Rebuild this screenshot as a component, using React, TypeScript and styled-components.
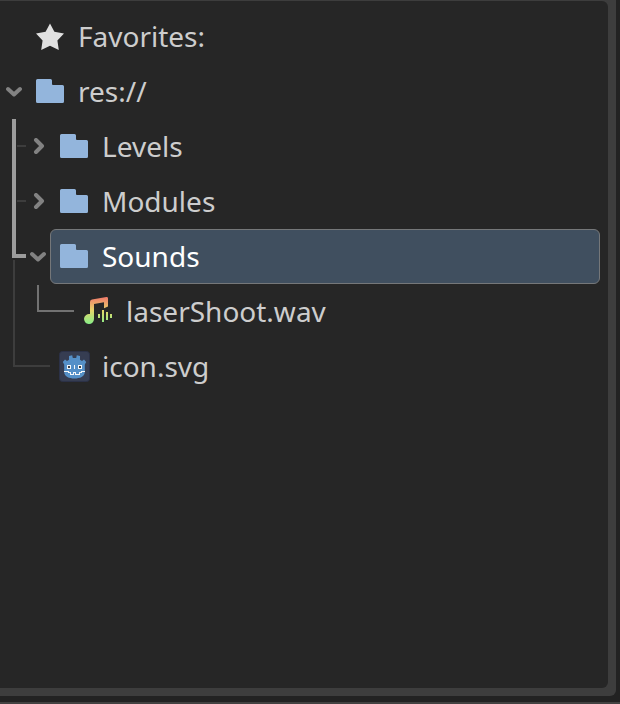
import React from 'react';
import styled, { createGlobalStyle } from 'styled-components';

const GlobalStyle = createGlobalStyle`
  * { box-sizing: border-box; }
  body { margin: 0; background: #222222; }
`;

const Dock = styled.div`
  display: flex;
  flex-direction: column;
  justify-content: space-between;
  width: 620px;
  height: 704px;
  overflow: hidden;
  background: #222222;
  font-family: 'Noto Sans', sans-serif;
`;

const Frame = styled.div`
  width: 616px;
  height: 696px;
  padding: 1px 8px 8px 0;
  background: #3d3d3d;
  border-bottom-right-radius: 6px;
`;

const Tree = styled.div`
  position: relative;
  height: 687px;
  padding: 8px 8px 0 0;
  background: #262626;
  border-radius: 0 6px 6px 0;
`;

const BottomEdge = styled.div`
  height: 2px;
  background: #434141;
`;

const Row = styled.div<{ $depth: number }>`
  display: flex;
  height: 55px;
  padding-left: ${(p) => 6 + p.$depth * 24}px;
`;

const Toggle = styled.div`
  display: flex;
  align-items: center;
  flex: 0 0 20px;
  svg { display: block; }
`;

const Item = styled.div<{ $selected?: boolean }>`
  display: flex;
  align-items: center;
  flex: 1;
  gap: 12px;
  padding: 0 0 1px 7px;
  border: 1px solid ${(p) => (p.$selected ? '#757779' : 'transparent')};
  border-radius: 6px;
  background: ${(p) => (p.$selected ? '#404f5f' : 'transparent')};
  color: ${(p) => (p.$selected ? '#ffffff' : '#cdcdcd')};
`;

const Label = styled.span`
  font-size: 28px;
  line-height: 38px;
  white-space: pre;
`;

const Icon = styled.svg`
  display: block;
  flex: none;
  width: 32px;
  height: 32px;
  overflow: visible;
`;

const Guides = styled.svg`
  position: absolute;
  left: 0;
  top: 0;
  pointer-events: none;
`;

const Chevron = ({ open }: { open: boolean }) => (
  <svg width="16" height="17" viewBox="0 0 16 17" fill="none" stroke="#828282" strokeWidth="4" strokeLinecap="round" strokeLinejoin="round">
    <path d={open ? 'M2 6l6 5.5L14 6' : 'M6 2l6 6-6 6'} />
  </svg>
);

const StarIcon = () => (
  <Icon viewBox="0 0 32 32" fill="#e0e0e0">
    <path d="M16 3.6l4.4 8.2 9.6 1.8-6.6 6.9 1.4 9.5-8.8-4.2L7.2 30l1.4-9.5L2 13.6l9.6-1.8z" />
  </Icon>
);

const FolderIcon = () => (
  <Icon viewBox="0 0 32 32" fill="#93b5dc">
    <path d="M3.500 4h13a1.500 1.500 0 0 1 1.500 1.500v3.500a1 1 0 0 0 1 1h9.500a1.500 1.500 0 0 1 1.500 1.500v15a1.500 1.500 0 0 1-1.500 1.500h-25a1.500 1.500 0 0 1-1.500-1.500v-21a1.500 1.500 0 0 1 1.500-1.500z" />
  </Icon>
);

const AudioIcon = () => (
  <Icon viewBox="0 0 32 32">
    <defs>
      <linearGradient id="wave" gradientUnits="userSpaceOnUse" x1="0" y1="2" x2="0" y2="29">
        <stop offset="0" stopColor="#f0796b" />
        <stop offset=".5" stopColor="#e6d56a" />
        <stop offset="1" stopColor="#86ee88" />
      </linearGradient>
    </defs>
    <g fill="url(#wave)">
      <path d="M24.4 2L10 4.6Q8 5 8 7v12.1A5 5 0 1 0 12 24V9l10-1.8v6L26 11.5V3.4Q26 1.800 24.400 2z" />
      <path d="M16 19h2v4h-2zM20 15h2v12h-2zM24 17h2v8h-2zM28 19h2v4h-2z" />
    </g>
  </Icon>
);

const GodotIcon = () => (
  <Icon viewBox="0 0 32 32">
    <rect x="1.5" y="1.500" width="30" height="30" rx="3" fill="#363d52" stroke="#2b3147" />
    <path
      fill="#5590c8"
      d="M11 6l3.200-.8.6 2.800h3.400l.6-2.800L22 6v3.800l2 1.200 2-1.500 2.200 2.500-1.400 2.500V22c0 4.500-5 6.500-10.300 6.500S6.200 26.500 6.200 22v-7.500L4.800 12 7 9.500 9 11l2-1.200z"
    />
    <g shapeRendering="crispEdges">
      <path fill="#f4f7fa" d="M9 15h4v4H9zM20 15h4v4h-4zM16 15h1v4h-1z" />
      <path fill="#3c3f45" d="M10 16h2v2h-2zM21 16h2v2h-2z" />
      <path fill="none" stroke="#f4f7fa" d="M6 21.500h4v1h2v2h3.500v-2.500h2v2.500H21v-2h2v-1h4" />
    </g>
  </Icon>
);

const icons = { star: StarIcon, folder: FolderIcon, audio: AudioIcon, godot: GodotIcon };

interface Entry {
  name: string;
  icon: keyof typeof icons;
  depth: number;
  open?: boolean;
  selected?: boolean;
}

const entries: Entry[] = [
  { name: 'Favorites:', icon: 'star', depth: 0 },
  { name: 'res://', icon: 'folder', depth: 0, open: true },
  { name: 'Levels', icon: 'folder', depth: 1, open: false },
  { name: 'Modules', icon: 'folder', depth: 1, open: false },
  { name: 'Sounds', icon: 'folder', depth: 1, open: true, selected: true },
  { name: 'laserShoot.wav', icon: 'audio', depth: 2 },
  { name: 'icon.svg', icon: 'godot', depth: 1 },
];

export default function App() {
  return (
    <>
      <GlobalStyle />
      <Dock>
        <Frame>
          <Tree>
            {entries.map(({ name, icon, depth, open, selected }) => {
              const Glyph = icons[icon];
              return (
                <Row key={name} $depth={depth}>
                  <Toggle>{open !== undefined && <Chevron open={open} />}</Toggle>
                  <Item $selected={selected}>
                    <Glyph />
                    <Label>{name}</Label>
                  </Item>
                </Row>
              );
            })}
            <Guides width="100" height="400" fill="none">
              <path d="M17 145h9M17 200h9M14 259v106h36" stroke="#3d3d3d" strokeWidth="2" />
              <path d="M38 284v26h36" stroke="#727272" strokeWidth="2" />
              <path d="M14 118v137h12" stroke="#9c9c9c" strokeWidth="4" />
            </Guides>
          </Tree>
        </Frame>
        <BottomEdge />
      </Dock>
    </>
  );
}
